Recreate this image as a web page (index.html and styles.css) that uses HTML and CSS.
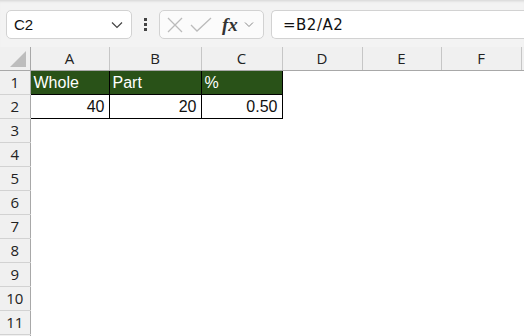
FILE: index.html
```html
<!DOCTYPE html>
<html lang="en">
<head>
  <meta charset="UTF-8" />
  <title>Sheet</title>
  <link rel="stylesheet" href="styles.css">
</head>
<body>
  <div class="bar">
    <div class="namebox">
      <span>C2</span>
      <svg width="12" height="8" viewBox="0 0 12 8"><path d="M1 1.5 L6 6.5 L11 1.5" fill="none" stroke="#444" stroke-width="1.2"/></svg>
    </div>
    <div class="dots"><i></i><i></i><i></i></div>
    <div class="fxbox">
      <svg width="18" height="18" viewBox="0 0 18 18"><path d="M2 2 L16 16 M16 2 L2 16" stroke="#bbb" stroke-width="1.3"/></svg>
      <svg width="22" height="18" viewBox="0 0 22 18"><path d="M1 9 L7 15 L21 2" fill="none" stroke="#bbb" stroke-width="1.3"/></svg>
      <span class="fx">fx</span>
      <svg width="10" height="7" viewBox="0 0 10 7"><path d="M1 1.5 L5 5.5 L9 1.5" fill="none" stroke="#888" stroke-width="1"/></svg>
    </div>
    <div class="formula">=B2/A2</div>
  </div>

  <table class="sheet">
    <colgroup>
      <col class="rh"><col class="a"><col class="b"><col class="c">
      <col class="d"><col class="e"><col class="f"><col class="g">
    </colgroup>
    <tr class="colhead">
      <th class="corner"><span class="tri"></span></th>
      <th>A</th><th>B</th><th>C</th><th>D</th><th>E</th><th>F</th><th></th>
    </tr>
    <tr>
      <th>1</th>
      <td class="hd">Whole</td><td class="hd">Part</td><td class="hd">%</td>
      <td></td><td></td><td></td><td></td>
    </tr>
    <tr>
      <th>2</th>
      <td class="num">40</td><td class="num">20</td><td class="num">0.50</td>
      <td></td><td></td><td></td><td></td>
    </tr>
    <tr><th>3</th><td colspan="7"></td></tr>
    <tr><th>4</th><td colspan="7"></td></tr>
    <tr><th>5</th><td colspan="7"></td></tr>
    <tr><th>6</th><td colspan="7"></td></tr>
    <tr><th>7</th><td colspan="7"></td></tr>
    <tr><th>8</th><td colspan="7"></td></tr>
    <tr><th>9</th><td colspan="7"></td></tr>
    <tr><th>10</th><td colspan="7"></td></tr>
    <tr><th>11</th><td colspan="7"></td></tr>
    <tr><th></th><td colspan="7"></td></tr>
  </table>
</body>
</html>
```

FILE: styles.css
```css
body { margin: 0; background: #fff; font-family: "Liberation Sans", Arial, sans-serif; overflow: hidden; }

.bar {
  height: 47px; box-sizing: border-box; background: #f3f3f3;
  box-shadow: inset 0 3px 3px -2px #0002;
  display: flex; align-items: center; padding: 2px 0 0 6px;
}
.namebox {
  width: 126px; height: 29px; box-sizing: border-box; background: #fff;
  border: 1px solid #d2d2d2; border-radius: 5px;
  display: flex; align-items: center; justify-content: space-between;
  padding: 0 8px 0 7px; font-size: 15px; color: #111;
}
.dots { width: 27px; display: flex; flex-direction: column; align-items: center; gap: 2px; }
.dots i { width: 3px; height: 3px; background: #444; display: block; }
.fxbox {
  width: 105px; height: 29px; box-sizing: border-box; background: #fbfbfb;
  border: 1px solid #d2d2d2; border-radius: 5px;
  display: flex; align-items: center; padding: 0 4px 0 6px; gap: 6px;
}
.fx { font-family: "Liberation Serif", serif; font-style: italic; font-weight: bold; font-size: 19px; color: #333; margin-left: 4px; }
.formula {
  flex: 1; margin-left: 7px; height: 29px; box-sizing: border-box; background: #fff;
  border: 1px solid #d2d2d2; border-right: none; border-radius: 5px 0 0 5px;
  display: flex; align-items: center; padding-left: 11px; color: #111;
  font-family: "DejaVu Sans", sans-serif; font-size: 15px; letter-spacing: 0.5px;
}

.sheet { border-collapse: collapse; table-layout: fixed; width: 524px; font-size: 15px; font-family: "Open Sans", sans-serif; }
.rh { width: 30px; } .a { width: 79px; } .b { width: 92px; } .c { width: 81px; }
.d { width: 80px; } .e { width: 79px; } .f { width: 80px; } .g { width: 3px; }
.sheet th, .sheet td { padding: 0; height: 24px; box-sizing: border-box; }
.sheet th {
  background: #f0f0f0; font-weight: normal; color: #222; line-height: 1;
  border-right: 1px solid #a8a8a8; border-bottom: 1px solid #d2d2d2; text-align: center;
}
.colhead th { height: 23px; border-right: 1px solid #c6c6c6; border-bottom: 1px solid #a8a8a8; }
.colhead th.corner { border-right: 1px solid #a8a8a8; position: relative; }
.tri {
  position: absolute; right: 4px; bottom: 3px; width: 0; height: 0;
  border-left: 16px solid transparent; border-bottom: 16px solid #bdbdbd;
}
.sheet td.hd {
  background: #295218; color: #fff; border: 1px solid #000;
  padding: 2px 0 0 3px; font-size: 16px; font-family: "Liberation Sans", Arial, sans-serif;
}
.sheet td.num {
  text-align: right; border: 1px solid #000; color: #111;
  padding: 2px 4px 0 0; font-size: 16px; font-family: "Liberation Sans", Arial, sans-serif;
}
```
